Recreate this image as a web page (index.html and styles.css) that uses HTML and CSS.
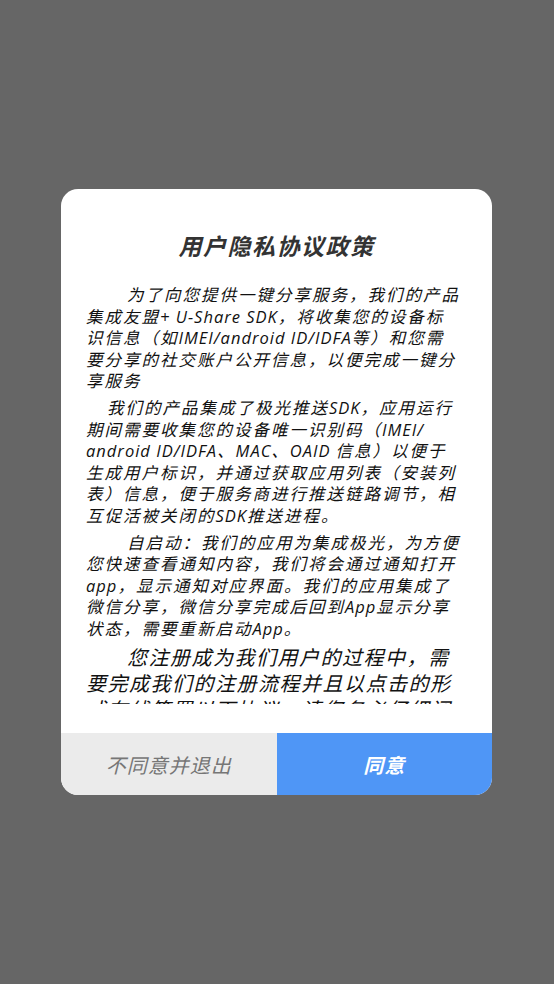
FILE: index.html
```html
<!DOCTYPE html>
<html lang="zh-CN">
<head>
<meta charset="utf-8">
<title>用户隐私协议政策</title>
<link rel="stylesheet" href="styles.css">
</head>
<body>
<div class="screen">
  <div class="dialog">
    <h1 class="title">用户隐私协议政策</h1>
    <div class="content">
      <p class="para indent-2">为了向您提供一键分享服务，我们的产品集成友盟<span class="en">+ U-Share SDK</span>，将收集您的设备标识信息（如<span class="en">IMEI/android ID/IDFA</span>等）和您需要分享的社交账户公开信息，以便完成一键分享服务</p>
      <p class="para indent-1 gap">我们的产品集成了极光推送<span class="en">SDK</span>，应用运行期间需要收集您的设备唯一识别码（<span class="en">IMEI/</span><wbr><span class="en">android ID/IDFA</span>、<span class="en">MAC</span>、<span class="en spaced">OAID</span>信息）以便于生成用户标识，并通过获取应用列表（安装列表）信息，便于服务商进行推送链路调节，相互促活被关闭的<span class="en">SDK</span>推送进程。</p>
      <p class="para indent-2 gap">自启动：我们的应用为集成极光，为方便您快速查看通知内容，我们将会通过通知打开<span class="en">app</span>，显示通知对应界面。我们的应用集成了微信分享，微信分享完成后回到<span class="en">App</span>显示分享状态，需要重新启动<span class="en">App</span>。</p>
      <p class="para large indent-2 gap">您注册成为我们用户的过程中，需要完成我们的注册流程并且以点击的形式在线签署以下协议，请您务必仔细阅读</p>
    </div>
    <div class="actions">
      <button class="btn btn-decline" type="button">不同意并退出</button>
      <button class="btn btn-agree" type="button">同意</button>
    </div>
  </div>
</div>
</body>
</html>
```

FILE: styles.css
```css
html, body {
  margin: 0;
  padding: 0;
  background: #666666;
}

.screen {
  width: 554px;
  height: 984px;
  padding-top: 189px;
  padding-left: 61px;
  box-sizing: border-box;
}

.dialog {
  width: 431px;
  height: 606px;
  background: #ffffff;
  border-radius: 17px;
  overflow: hidden;
  display: flex;
  flex-direction: column;
  font-family: "Open Sans", "Noto Sans CJK SC", sans-serif;
  font-style: italic;
}

.title {
  margin: 0;
  padding-top: 41px;
  height: 32px;
  line-height: 32px;
  font-size: 23px;
  font-weight: 700;
  letter-spacing: 1.5px;
  color: #333333;
  text-align: center;
}

.content {
  margin-top: 22px;
  height: 420px;
  overflow: hidden;
  padding: 0 31px 0 25px;
  color: #111111;
}

.para {
  margin: 0;
  font-size: 16.5px;
  line-height: 21.6px;
  letter-spacing: 2px;
}

.en {
  display: inline-block;
  text-indent: 0;
  letter-spacing: 1px;
}

.en.spaced {
  margin-right: 5px;
}

.indent-2 { text-indent: 41px; }
.indent-1 { text-indent: 21px; }
.gap { margin-top: 5px; }

.para.large {
  font-size: 20px;
  line-height: 26px;
  letter-spacing: 1.5px;
}

.actions {
  margin-top: auto;
  height: 62px;
  display: flex;
}

.btn {
  flex: 1;
  border: 0;
  margin: 0;
  padding: 0;
  font-family: "Open Sans", "Noto Sans CJK SC", sans-serif;
  font-style: italic;
  font-size: 20px;
  letter-spacing: 1px;
}

.btn-decline {
  background: #ebebeb;
  color: #767676;
}

.btn-agree {
  background: #4f96f6;
  color: #ffffff;
  font-weight: 700;
}
```
